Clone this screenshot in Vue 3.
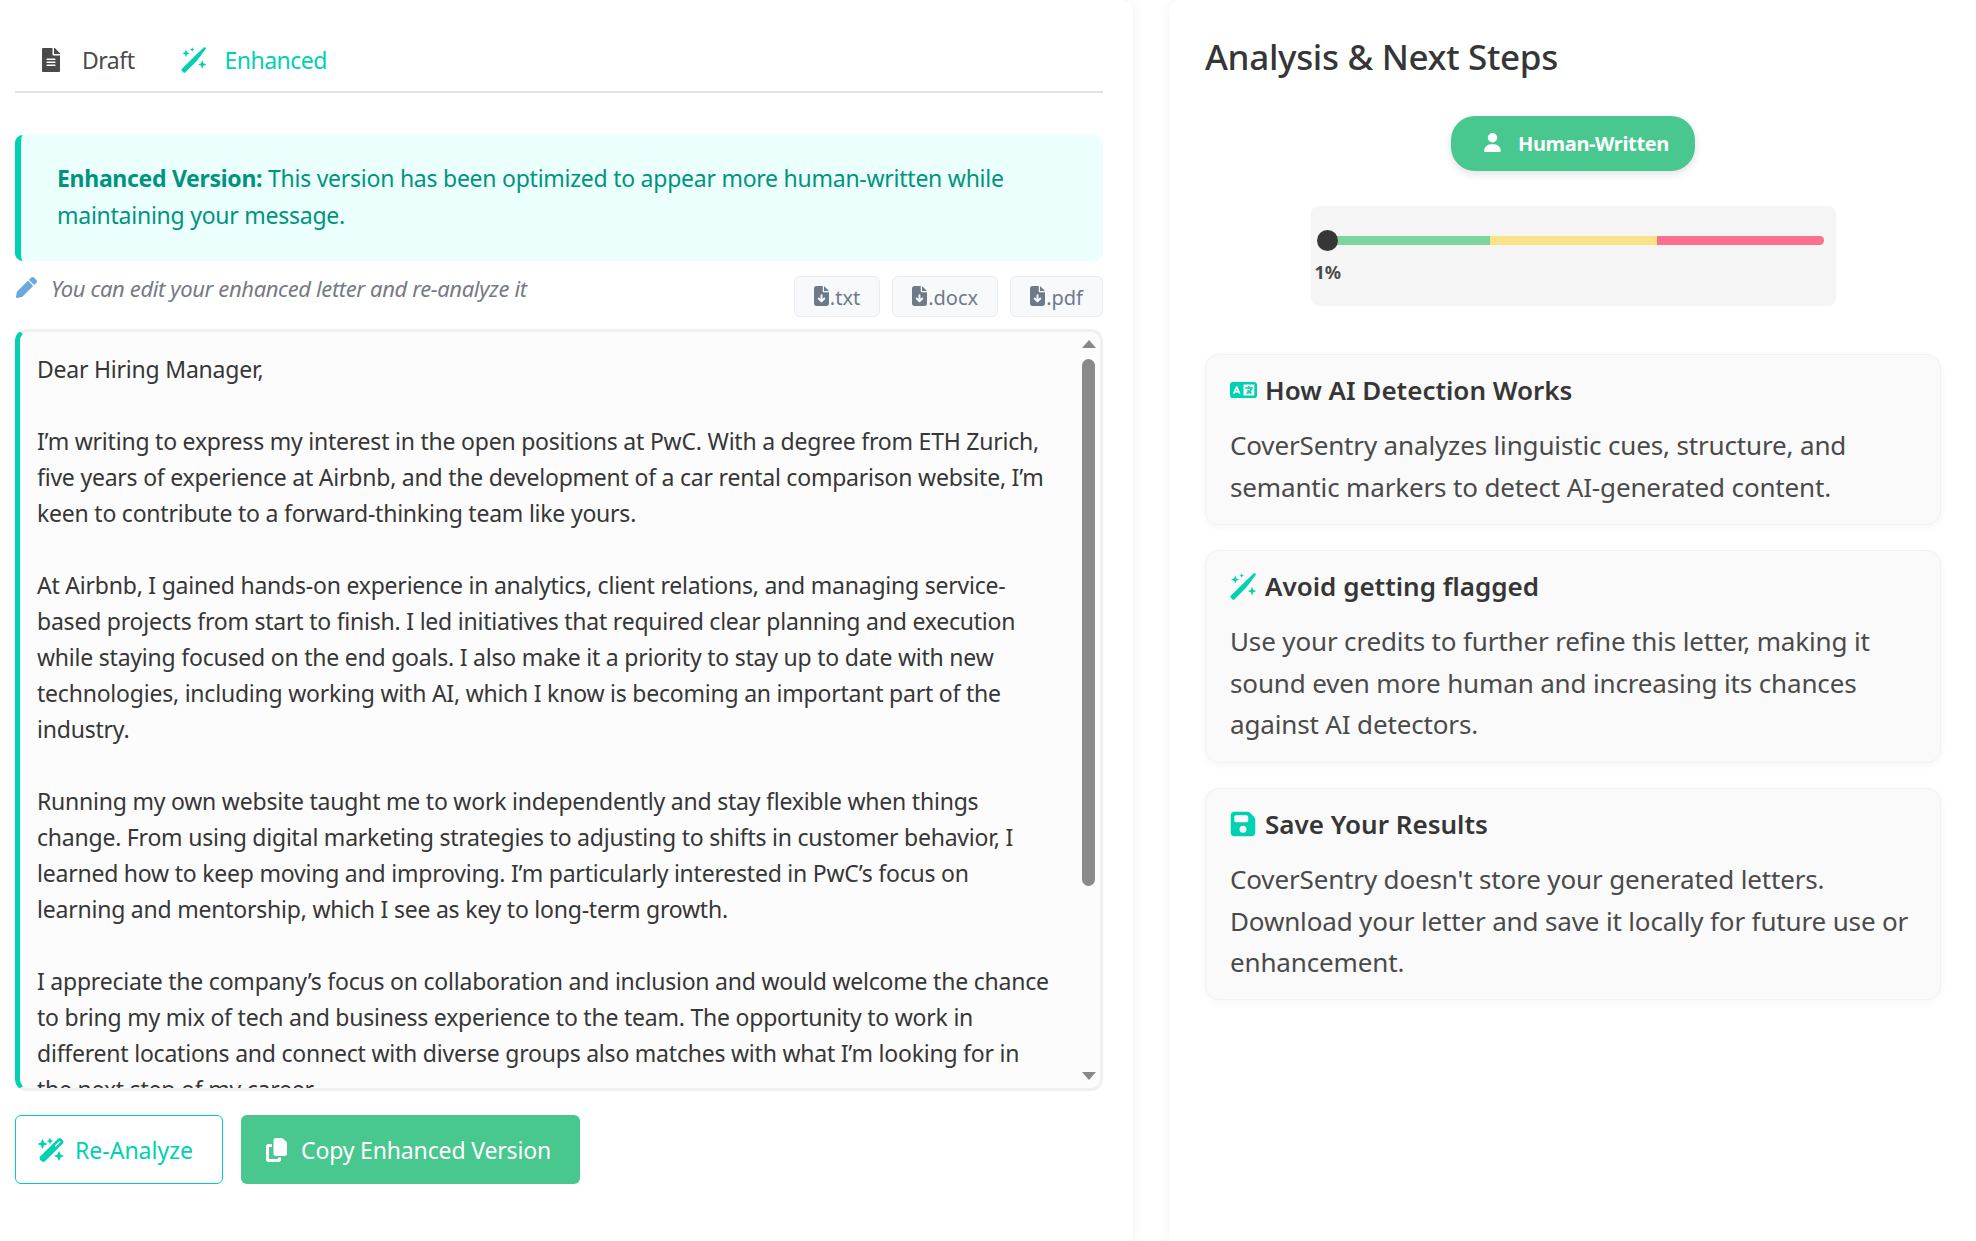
<template>
  <div class="page">
    <section class="left">
      <div class="tabs">
        <div class="tab">
          <svg class="tab-icon draft-icon" viewBox="0 0 384 512"><path :d="icons.file" /></svg>
          <span>Draft</span>
        </div>
        <div class="tab active">
          <svg class="tab-icon wand-icon" viewBox="0 0 24 24"><path :d="icons.wandThin" /></svg>
          <span>Enhanced</span>
        </div>
      </div>

      <div class="notice">
        <strong>Enhanced Version:</strong> This version has been optimized to appear more human-written while<br />maintaining your message.
      </div>

      <div class="edit-row">
        <div class="hint">
          <svg class="pencil" viewBox="0 0 512 512"><path :d="icons.pencil" /></svg>
          <em>You can edit your enhanced letter and re-analyze it</em>
        </div>
        <div class="downloads">
          <button v-for="ext in exts" :key="ext" class="dl">
            <svg viewBox="0 0 384 512"><path :d="icons.download" /></svg>{{ ext }}
          </button>
        </div>
      </div>

      <div class="letter">
        <div class="letter-text">
          <p v-for="(para, i) in letter" :key="i">
            <span v-for="line in para" :key="line" class="line">{{ line }}</span>
          </p>
        </div>
        <div class="bar-up"></div>
        <div class="bar-thumb"></div>
        <div class="bar-down"></div>
      </div>

      <div class="actions">
        <button class="btn outline">
          <svg viewBox="0 0 576 512"><path :d="icons.wand" /></svg>
          <span>Re-Analyze</span>
        </button>
        <button class="btn solid">
          <svg viewBox="0 0 448 512"><path :d="icons.copy" /></svg>
          <span>Copy Enhanced Version</span>
        </button>
      </div>
    </section>

    <aside class="right">
      <h2>Analysis &amp; Next Steps</h2>
      <div class="badge-row">
        <div class="badge">
          <svg viewBox="0 0 448 512"><path :d="icons.user" /></svg>
          <span>Human-Written</span>
        </div>
      </div>
      <div class="meter">
        <div class="track">
          <div class="seg green"></div>
          <div class="seg yellow"></div>
          <div class="seg red"></div>
          <div class="dot"></div>
        </div>
        <div class="pct">1%</div>
      </div>

      <div v-for="card in cards" :key="card.title" class="card">
        <h3>
          <svg :viewBox="card.box" :class="card.cls"><path :d="card.icon" /></svg>
          <span>{{ card.title }}</span>
        </h3>
        <p><span v-for="line in card.lines" :key="line" class="line">{{ line }}</span></p>
      </div>
    </aside>
  </div>
</template>

<script setup>
const icons = {
  file: 'M224 136V0H24C10.7 0 0 10.7 0 24v464c0 13.3 10.7 24 24 24h336c13.3 0 24-10.7 24-24V160H248c-13.2 0-24-10.8-24-24zm64 236c0 6.6-5.4 12-12 12H108c-6.6 0-12-5.4-12-12v-8c0-6.6 5.4-12 12-12h168c6.6 0 12 5.4 12 12v8zm0-64c0 6.6-5.4 12-12 12H108c-6.6 0-12-5.4-12-12v-8c0-6.6 5.4-12 12-12h168c6.6 0 12 5.4 12 12v8zm0-72v8c0 6.6-5.4 12-12 12H108c-6.6 0-12-5.4-12-12v-8c0-6.6 5.4-12 12-12h168c6.6 0 12 5.4 12 12zm96-114.1v6.1H256V0h6.1c6.4 0 12.5 2.5 17 7l97.9 98c4.5 4.5 7 10.6 7 16.9z',
  pencil: 'M497.9 142.1l-46.1 46.1c-4.7 4.7-12.3 4.7-17 0l-111-111c-4.7-4.7-4.7-12.3 0-17l46.1-46.1c18.7-18.7 49.1-18.7 67.9 0l60.1 60.1c18.8 18.7 18.8 49.1 0 67.9zM284.2 99.8L21.6 362.4.4 483.9c-2.9 16.4 11.4 30.6 27.8 27.8l121.5-21.3 262.6-262.6c4.7-4.7 4.7-12.3 0-17l-111-111c-4.8-4.7-12.4-4.7-17.1 0z',
  download: 'M64 0C28.7 0 0 28.7 0 64V448c0 35.3 28.7 64 64 64H320c35.3 0 64-28.7 64-64V160H256c-17.7 0-32-14.3-32-32V0H64zM256 0V128H384L256 0zM216 232V334.1l31-31c9.4-9.4 24.6-9.4 33.9 0s9.4 24.6 0 33.9l-72 72c-9.4 9.4-24.6 9.4-33.9 0l-72-72c-9.4-9.4-9.4-24.6 0-33.9s24.6-9.4 33.9 0l31 31V232c0-13.3 10.7-24 24-24s24 10.7 24 24z',
  copy: 'M208 0H332.1c12.7 0 24.9 5.1 33.9 14.1l67.9 67.9c9 9 14.1 21.2 14.1 33.9V336c0 26.5-21.5 48-48 48H208c-26.5 0-48-21.5-48-48V48c0-26.5 21.5-48 48-48zM48 128h80v64H64V448H256V416h64v48c0 26.5-21.5 48-48 48H48c-26.5 0-48-21.5-48-48V176c0-26.5 21.5-48 48-48z',
  user: 'M224 256A128 128 0 1 0 224 0a128 128 0 1 0 0 256zm-45.7 48C79.8 304 0 383.8 0 482.3C0 498.7 13.3 512 29.7 512H418.3c16.4 0 29.7-13.3 29.7-29.7C448 383.8 368.2 304 269.7 304H178.3z',
  wand: 'M234.7 42.7L197 56.8c-3 1.1-5 4-5 7.2s2 6.1 5 7.2l37.7 14.1L248.8 123c1.1 3 4 5 7.2 5s6.1-2 7.2-5l14.1-37.7L315 71.2c3-1.1 5-4 5-7.2s-2-6.1-5-7.2L277.3 42.7 263.2 5c-1.1-3-4-5-7.2-5s-6.1 2-7.2 5L234.7 42.7zM46.1 395.4c-18.7 18.7-18.7 49.1 0 67.9l34.6 34.6c18.7 18.7 49.1 18.7 67.9 0L529.9 116.5c18.7-18.7 18.7-49.1 0-67.9L495.3 14.1c-18.7-18.7-49.1-18.7-67.9 0L46.1 395.4zM484.6 82.6l-105 105-23.3-23.3 105-105 23.3 23.3zM7.5 117.2C3 118.9 0 123.2 0 128s3 9.1 7.5 10.8L64 160l21.2 56.5c1.7 4.5 6 7.5 10.8 7.5s9.1-3 10.8-7.5L128 160l56.5-21.2c4.5-1.7 7.5-6 7.5-10.8s-3-9.1-7.5-10.8L128 96 106.8 39.5C105.1 35 100.8 32 96 32s-9.1 3-10.8 7.5L64 96 7.5 117.2zm352 256c-4.5 1.7-7.5 6-7.5 10.8s3 9.1 7.5 10.8L416 416l21.2 56.5c1.7 4.5 6 7.5 10.8 7.5s9.1-3 10.8-7.5L480 416l56.5-21.2c4.5-1.7 7.5-6 7.5-10.8s-3-9.1-7.5-10.8L480 352l-21.2-56.5c-1.7-4.5-6-7.5-10.8-7.5s-9.1 3-10.8 7.5L416 352l-56.5 21.2z',
  // thin wand: one tapered stick, heavy at the bottom left, plus three sparkles
  wandThin: 'M.7 20.3 12.8 8.2 21 .5c.5-.5 1.100-.5 1.600 0s.5 1.100 0 1.600L14.500 12.900 3.900 23.500a1.200 1.200 0 0 1-1.700 0L.7 22a1.200 1.200 0 0 1 0-1.700zM4.600 2.200l1 2.600 2.600 1-2.600 1-1 2.600-1-2.600L1 5.800l2.600-1zM10.400.2l.6 1.500 1.500.6-1.500.6-.6 1.500-.6-1.500-1.500-.6 1.500-.6zM19.600 12.200l1.100 2.800 2.800 1.100-2.800 1.100-1.100 2.800-1.100-2.800-2.800-1.100 2.800-1.100z',
  language: 'M0 128C0 92.7 28.7 64 64 64H256h48 16H576c35.3 0 64 28.7 64 64V384c0 35.3-28.7 64-64 64H320 304 256 64c-35.3 0-64-28.7-64-64V128zm320 0V384H576V128H320zM178.3 175.9c-3.2-7.2-10.4-11.9-18.3-11.9s-15.1 4.7-18.3 11.9l-64 144c-4.5 10.1 .1 21.9 10.2 26.4s21.9-.1 26.4-10.2l8.9-20.1h73.6l8.9 20.1c4.5 10.1 16.3 14.6 26.4 10.2s14.6-16.3 10.2-26.4l-64-144zM160 233.2L179 276H141l19-42.8zM448 164c11 0 20 9 20 20v4h44 16c11 0 20 9 20 20s-9 20-20 20h-2l-1.6 4.5c-8.9 24.4-22.4 46.6-39.6 65.4c.9 .6 1.8 1.1 2.7 1.6l18.9 11.3c9.5 5.7 12.5 18 6.9 27.4s-18 12.5-27.4 6.9l-18.9-11.3c-4.5-2.7-8.8-5.5-13.1-8.5c-10.6 7.5-21.9 14-34 19.4l-3.6 1.6c-10.1 4.5-21.9-.1-26.4-10.2s.1-21.9 10.2-26.4l3.6-1.6c6.4-2.9 12.6-6.1 18.5-9.8l-12.2-12.2c-7.8-7.8-7.8-20.5 0-28.3s20.5-7.8 28.3 0l14.6 14.6 .5 .5c12.4-13.1 22.5-28.3 29.8-45H448 376c-11 0-20-9-20-20s9-20 20-20h52v-4c0-11 9-20 20-20z',
  save: 'M64 32C28.7 32 0 60.7 0 96V416c0 35.3 28.7 64 64 64H384c35.3 0 64-28.7 64-64V173.3c0-17-6.7-33.3-18.7-45.3L352 50.7C340 38.7 323.7 32 306.7 32H64zm0 96c0-17.7 14.3-32 32-32H288c17.7 0 32 14.3 32 32v64c0 17.7-14.3 32-32 32H96c-17.7 0-32-14.3-32-32V128zM224 288a64 64 0 1 1 0 128 64 64 0 1 1 0-128z',
}

const exts = ['.txt', '.docx', '.pdf']

const letter = [
  ['Dear Hiring Manager,'],
  [
    'I’m writing to express my interest in the open positions at PwC. With a degree from ETH Zurich,',
    'five years of experience at Airbnb, and the development of a car rental comparison website, I’m',
    'keen to contribute to a forward-thinking team like yours.',
  ],
  [
    'At Airbnb, I gained hands-on experience in analytics, client relations, and managing service-',
    'based projects from start to finish. I led initiatives that required clear planning and execution',
    'while staying focused on the end goals. I also make it a priority to stay up to date with new',
    'technologies, including working with AI, which I know is becoming an important part of the',
    'industry.',
  ],
  [
    'Running my own website taught me to work independently and stay flexible when things',
    'change. From using digital marketing strategies to adjusting to shifts in customer behavior, I',
    'learned how to keep moving and improving. I’m particularly interested in PwC’s focus on',
    'learning and mentorship, which I see as key to long-term growth.',
  ],
  [
    'I appreciate the company’s focus on collaboration and inclusion and would welcome the chance',
    'to bring my mix of tech and business experience to the team. The opportunity to work in',
    'different locations and connect with diverse groups also matches with what I’m looking for in',
    'the next step of my career.',
  ],
]

const cards = [
  {
    title: 'How AI Detection Works',
    icon: icons.language,
    box: '0 0 640 512',
    cls: 'ic-lang',
    lines: [
      'CoverSentry analyzes linguistic cues, structure, and',
      'semantic markers to detect AI-generated content.',
    ],
  },
  {
    title: 'Avoid getting flagged',
    icon: icons.wandThin,
    box: '0 0 24 24',
    cls: 'ic-wand',
    lines: [
      'Use your credits to further refine this letter, making it',
      'sound even more human and increasing its chances',
      'against AI detectors.',
    ],
  },
  {
    title: 'Save Your Results',
    icon: icons.save,
    box: '0 0 448 512',
    cls: 'ic-save',
    lines: [
      'CoverSentry doesn\'t store your generated letters.',
      'Download your letter and save it locally for future use or',
      'enhancement.',
    ],
  },
]
</script>

<style>
html,
body {
  margin: 0;
  background: #fff;
}
</style>

<style scoped>
.page {
  display: flex;
  height: 1241px;
  overflow: hidden;
  font-family: 'Noto Sans', 'Open Sans', sans-serif;
  color: #4a4a4a;
}
.line {
  display: block;
  white-space: nowrap;
}
svg {
  fill: currentColor;
  display: block;
  flex: none;
}

/* left column */
.left {
  width: 1133px;
  box-sizing: border-box;
  padding: 0 30px 0 15px;
  background: #fff;
  border-radius: 0 12px 0 0;
  box-shadow: 0 0 14px rgba(0, 0, 0, 0.06);
}
.tabs {
  display: flex;
  height: 93px;
  box-sizing: border-box;
  border-bottom: 2px solid #e3e3e3;
}
.tab {
  display: flex;
  align-items: center;
  height: 120px;
  padding: 0 27px;
  font-size: 23px;
  color: #4a4a4a;
}
.tab span {
  letter-spacing: -0.5px;
}
.tab.active {
  color: #00d1b2;
  padding-left: 20px;
}
.tab-icon {
  margin-right: 22px;
}
.draft-icon {
  width: 18px;
  height: 24px;
}
.wand-icon {
  width: 26px;
  height: 26px;
  margin-right: 17px;
}
.notice {
  margin-top: 42px;
  box-sizing: border-box;
  height: 126px;
  padding: 25px 36px;
  background: #ebfffc;
  border-left: 6px solid #00d1b2;
  border-radius: 8px;
  font-size: 23px;
  line-height: 36.5px;
  color: #00947e;
  letter-spacing: -0.25px;
}
.notice strong {
  font-weight: 700;
  letter-spacing: -0.3px;
}
.edit-row {
  display: flex;
  justify-content: space-between;
  margin-top: 15px;
}
.hint {
  display: flex;
  align-items: center;
  height: 23px;
  margin-left: 1px;
  color: #757a85;
  font-size: 22px;
}
.hint em {
  letter-spacing: -0.38px;
}
.pencil {
  width: 21px;
  height: 21px;
  color: #6aa8e0;
  margin-right: 14px;
}
.downloads {
  display: flex;
  gap: 12px;
}
.dl {
  display: flex;
  align-items: center;
  gap: 1px;
  height: 41px;
  padding: 2px 19px 0;
  border: 1px solid #e9edf3;
  border-radius: 6px;
  background: #f8f9fb;
  color: #6e7a8a;
  font: inherit;
  font-size: 20px;
}
.dl svg {
  width: 15px;
  height: 20px;
  margin-top: -4px;
}
.letter {
  position: relative;
  margin-top: 12px;
  height: 762px;
  box-sizing: border-box;
  border: 3px solid #f0f0f0;
  border-left: 5px solid #00d1b2;
  border-radius: 12px;
  background: #fcfcfc;
  overflow: hidden;
}
.letter-text {
  padding: 19px 0 0 17px;
  font-size: 23px;
  line-height: 36px;
  color: #363636;
  letter-spacing: -0.22px;
}
.letter-text p {
  margin: 0 0 36px;
}
.bar-up,
.bar-down {
  position: absolute;
  right: 4px;
  width: 0;
  height: 0;
  border-left: 7.5px solid transparent;
  border-right: 7.5px solid transparent;
}
.bar-up {
  top: 8px;
  border-bottom: 8px solid #888;
}
.bar-down {
  bottom: 8px;
  border-top: 8px solid #888;
}
.bar-thumb {
  position: absolute;
  top: 27px;
  right: 5px;
  width: 13px;
  height: 527px;
  border-radius: 7px;
  background: #8a8a8a;
}
.actions {
  display: flex;
  gap: 18px;
  margin-top: 24px;
}
.btn {
  display: flex;
  align-items: center;
  height: 69px;
  box-sizing: border-box;
  border-radius: 6px;
  font: inherit;
  font-size: 23px;
}
.btn svg {
  margin-right: 10px;
}
.btn.outline {
  width: 208px;
  padding: 0 0 0 22px;
  background: #fff;
  border: 1.5px solid #00d1b2;
  color: #00d1b2;
}
.btn.outline svg {
  width: 27px;
  height: 24px;
}
.btn.solid {
  width: 339px;
  padding: 0 0 0 25px;
  background: #48c78e;
  border: 0;
  color: #fff;
  letter-spacing: -0.15px;
}
.btn.solid svg {
  width: 21px;
  height: 24px;
  margin-right: 14px;
}

/* right column */
.right {
  flex: 1;
  margin-left: 36px;
  padding: 0 35px 0 36px;
  background: #fff;
  border-radius: 12px 0 0 0;
  box-shadow: 0 0 14px rgba(0, 0, 0, 0.06);
}
h2 {
  margin: 0;
  padding-top: 32px;
  font-size: 35px;
  line-height: 50px;
  font-weight: 500;
  color: #363636;
  letter-spacing: -0.33px;
}
.badge-row {
  display: flex;
  justify-content: center;
  margin-top: 34px;
}
.badge {
  display: flex;
  align-items: center;
  height: 55px;
  width: 244px;
  box-sizing: border-box;
  padding-left: 33px;
  border-radius: 24px;
  background: #48c78e;
  color: #fff;
  font-size: 20px;
  font-weight: 700;
  box-shadow: 0 3px 8px rgba(0, 0, 0, 0.12);
}
.badge svg {
  width: 17px;
  height: 19px;
  margin-right: 17px;
  margin-top: -3px;
}
.badge span {
  letter-spacing: -0.35px;
}
.meter {
  width: 525px;
  height: 100px;
  margin: 35px auto 0;
  box-sizing: border-box;
  padding: 30px 12px 0 13px;
  background: #f5f5f5;
  border-radius: 8px;
}
.track {
  position: relative;
  display: flex;
  height: 9px;
}
.seg {
  flex: 1;
}
.green {
  background: #7dd49e;
  border-radius: 5px 0 0 5px;
}
.yellow {
  background: #fce287;
}
.red {
  background: #fd6f8c;
  border-radius: 0 5px 5px 0;
}
.dot {
  position: absolute;
  left: -7px;
  top: -6px;
  width: 21px;
  height: 21px;
  border-radius: 50%;
  background: #363636;
}
.pct {
  margin-top: 15px;
  margin-left: -9px;
  font-size: 18px;
  line-height: 24px;
  font-weight: 700;
  color: #4a4a4a;
}
.card {
  box-sizing: border-box;
  padding: 17px 24px 0;
  background: #fafafa;
  border: 1px solid #f2f2f2;
  border-radius: 14px;
  box-shadow: 0 2px 8px rgba(0, 0, 0, 0.04);
  margin-top: 25px;
}
.meter + .card {
  margin-top: 48px;
  height: 171px;
}
.card:nth-child(5) {
  height: 213px;
}
.card:nth-child(6) {
  height: 212px;
}
h3 {
  display: flex;
  align-items: center;
  margin: 0;
  font-size: 26px;
  line-height: 36px;
  font-weight: 600;
  color: #363636;
}
h3 svg {
  color: #00d1b2;
  margin-right: 8px;
}
.ic-lang {
  width: 27px;
  height: 22px;
}
.ic-wand {
  width: 27px;
  height: 27px;
}
.ic-save {
  width: 26px;
  height: 28px;
  margin-right: 9px;
}
.card p {
  margin: 17px 0 0;
  font-size: 26px;
  line-height: 41.6px;
  color: #4a4a4a;
  letter-spacing: -0.15px;
}
</style>
